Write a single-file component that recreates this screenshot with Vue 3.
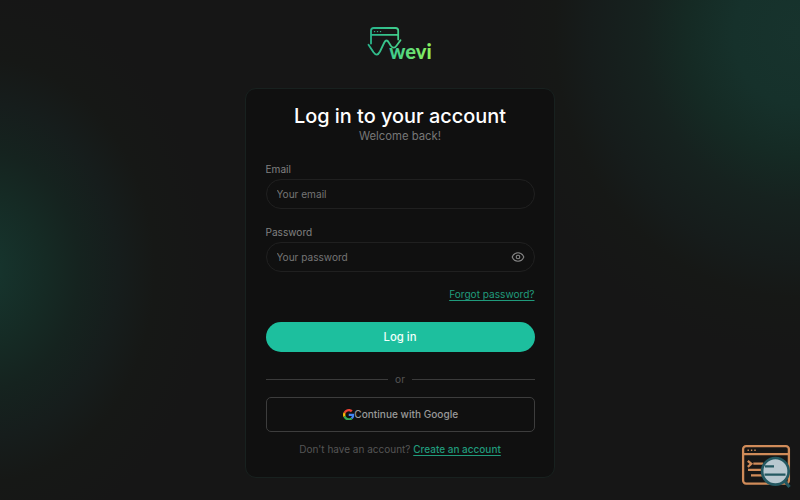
<template>
  <div class="page">

    <div class="glow glow-left"></div>
    <div class="glow glow-right"></div>

    <svg class="logo" viewBox="0 0 66 36" aria-label="wevi">
      <defs>
        <linearGradient id="brand" gradientUnits="userSpaceOnUse" x1="0" y1="0" x2="66" y2="14">
          <stop offset="0" stop-color="#25b18c"/>
          <stop offset=".5" stop-color="#43cf8b"/>
          <stop offset="1" stop-color="#8cf15c"/>
        </linearGradient>
      </defs>
      <g fill="none" stroke="url(#brand)" stroke-width="1.800" stroke-linecap="round" stroke-linejoin="round">
        <path d="M4 17.500V4.600q0-2.600 2.600-2.600h22q2.600 0 2.600 2.600V13.500M4 8.800h27.200"/>
        <path d="M1.500 18.700L6.500 26.200Q10 31.200 13 25.500L17.300 16.500Q19.500 12.500 21.800 16.500L23.800 19.800Q26.800 23.600 29.500 19.800L33.500 14.300"/>
        <path d="M7.500 5.600h.1M10.500 5.600h.1M13.500 5.600h.1" stroke-width="1.400"/>
      </g>
      <text x="22.300" y="32.500" textLength="42.300">wevi</text>
    </svg>

    <main class="card">

      <h1>Log in to your account</h1>
      <p class="subtitle">Welcome back!</p>

      <form @submit.prevent>

        <div class="field">
          <label for="email">Email</label>
          <div class="input-wrapper">
            <input id="email" v-model="email" type="email" placeholder="Your email"/>
          </div>
        </div>

        <div class="field">
          <label for="password">Password</label>
          <div class="input-wrapper">
            <input
              id="password"
              v-model="password"
              :type="showPassword ? 'text' : 'password'"
              placeholder="Your password"
            />
            <button
              class="toggle"
              type="button"
              aria-label="Show password"
              @click="showPassword = !showPassword"
            >
              <svg viewBox="0 0 14 12">
                <path d="M1.200 6C2.400 3.100 4.500 1.800 7 1.800S11.600 3.100 12.800 6C11.600 8.900 9.500 10.200 7 10.200S2.400 8.900 1.200 6Z"/>
                <circle cx="7" cy="6" r="1.800"/>
              </svg>
            </button>
          </div>
        </div>

        <div class="forgot">
          <a href="#">Forgot password?</a>
        </div>

        <button class="submit" type="submit">Log in</button>

      </form>

      <div class="divider"><span>or</span></div>

      <button class="google" type="button">
        <svg viewBox="0 0 48 48">
          <path fill="#EA4335" d="M24 9.500c3.540 0 6.710 1.220 9.210 3.600l6.850-6.850C35.900 2.380 30.470 0 24 0 14.620 0 6.510 5.380 2.560 13.220l7.980 6.190C12.430 13.720 17.740 9.500 24 9.500z"/>
          <path fill="#4285F4" d="M46.980 24.550c0-1.570-.15-3.090-.38-4.550H24v9.020h12.940c-.58 2.960-2.260 5.480-4.780 7.180l7.730 6c4.510-4.180 7.090-10.360 7.090-17.650z"/>
          <path fill="#FBBC05" d="M10.530 28.590c-.48-1.450-.76-2.990-.76-4.590s.27-3.140.76-4.590l-7.980-6.190C.92 16.460 0 20.120 0 24s.92 7.540 2.560 10.780l7.970-6.190z"/>
          <path fill="#34A853" d="M24 48c6.480 0 11.930-2.130 15.890-5.810l-7.730-6c-2.150 1.450-4.920 2.300-8.160 2.300-6.260 0-11.570-4.220-13.470-9.910l-7.980 6.190C6.510 42.620 14.620 48 24 48z"/>
        </svg>
        <span>Continue with Google</span>
      </button>

      <p class="signup">Don't have an account? <a href="#">Create an account</a></p>

    </main>

    <button class="inspector" type="button" aria-label="Open inspector">
      <svg viewBox="0 0 50 44">
        <g fill="none" stroke="#d08b59" stroke-width="2.300">
          <rect x="2.100" y="2.100" width="45.800" height="37.500" rx="3"/>
          <path d="M2 10.200h46"/>
          <path d="M6.500 6.200h1.400M9.900 6.200h1.400M13.300 6.200h1.400" stroke-width="1.500"/>
          <path d="M6.800 16.800l3.500 3-3.500 3M12.300 19.700h10M7 25.800h13M10 31.300h12"/>
        </g>
        <path d="M44 37.500l4.500 5.500" stroke="#245861" stroke-width="3"/>
        <circle cx="34.400" cy="27.300" r="13.300" fill="#b9c8d0" stroke="#245861" stroke-width="2.700"/>
        <path d="M24 22.300h9M23.500 30.700h21" stroke="#245861" stroke-width="2.200"/>
      </svg>
    </button>

  </div>
</template>

<script setup>
import { ref } from 'vue'

const email = ref('')
const password = ref('')
const showPassword = ref(false)
</script>

<style>
body {
  margin: 0;
  background: #161616;
}
</style>

<style scoped>
* {
  box-sizing: border-box;
}

.page {
  position: relative;
  height: 500px;
  overflow: hidden;
  display: flex;
  flex-direction: column;
  align-items: center;
  padding-top: 26px;
  background: #161616;
  font-family: Inter, "Liberation Sans", sans-serif;
}

.glow {
  position: absolute;
  border-radius: 50%;
}

.glow-left {
  left: -250px;
  top: -10px;
  width: 460px;
  height: 560px;
  background: radial-gradient(closest-side, #17362f 0%, #16332c 9%, #152a24 29%, #15231f 43%, #161d1c 60%, #161816 76%, #161616 100%);
}

.glow-right {
  right: -300px;
  top: -285px;
  width: 600px;
  height: 640px;
  background: radial-gradient(closest-side, #17332d 0%, #16312b 22%, #152a24 38%, #16221f 52%, #161c1b 70%, #161816 82%, #161616 100%);
}

.logo {
  position: relative;
  width: 66px;
  height: 36px;
  flex: none;
}

.logo text {
  font: 900 20px Lato, sans-serif;
  fill: url(#brand);
}

.card {
  position: relative;
  width: 310px;
  height: 390px;
  margin-top: 26px;
  padding: 14px 19.5px 0;
  border: 1px solid #18211f;
  border-radius: 11px;
  background: #101010;
}

h1 {
  margin: 0;
  font-size: 19.9px;
  line-height: 26px;
  font-weight: 500;
  text-align: center;
  white-space: nowrap;
  color: #fff;
}

.subtitle {
  margin: 0;
  font-size: 11.3px;
  line-height: 14px;
  text-align: center;
  color: #777;
}

form {
  margin-top: 18px;
}

.field {
  margin-bottom: 15px;
}

label {
  display: block;
  font-size: 10.1px;
  line-height: 16px;
  margin-bottom: 2px;
  color: #808080;
}

.input-wrapper {
  display: flex;
  align-items: center;
  height: 30px;
  padding: 0 9px 0 10px;
  border: 1px solid #202020;
  border-radius: 15px;
}

input {
  flex: 1;
  min-width: 0;
  padding: 0;
  border: none;
  outline: none;
  background: transparent;
  font: 10.1px Inter, sans-serif;
  color: #ddd;
}

input::placeholder {
  color: #757575;
  opacity: 1;
}

.toggle {
  display: flex;
  padding: 0;
  border: none;
  background: none;
  cursor: pointer;
}

.toggle svg {
  width: 14px;
  height: 12px;
  fill: none;
  stroke: #858585;
  stroke-width: 1.1;
}

a {
  color: #209b7c;
  text-decoration: underline;
  text-underline-offset: 2px;
}

.forgot {
  margin-top: -1px;
  font-size: 10.1px;
  line-height: 16px;
  text-align: right;
}

.submit {
  display: block;
  width: 100%;
  height: 30px;
  margin-top: 20px;
  padding: 0;
  border: none;
  border-radius: 15px;
  background: #1dbf9e;
  font: 500 11.3px Inter, sans-serif;
  color: #f2fffb;
  cursor: pointer;
}

.divider {
  display: flex;
  align-items: center;
  gap: 7px;
  height: 16px;
  margin-top: 19.5px;
  font-size: 10.1px;
  color: #555;
}

.divider span {
  line-height: 14px;
  padding-bottom: 1px;
}

.divider::before,
.divider::after {
  content: "";
  flex: 1;
  height: 1px;
  background: #3b3b3b;
}

.google {
  display: flex;
  align-items: center;
  justify-content: center;
  width: 100%;
  height: 35.5px;
  margin-top: 9px;
  padding: 0 0 0 1px;
  border: 1px solid #3d3d3d;
  border-radius: 5px;
  background: none;
  font: 500 10.1px Inter, sans-serif;
  color: #999;
  cursor: pointer;
}

.google svg {
  width: 11.5px;
  height: 11.5px;
}

.signup {
  margin: 9px 0 0;
  font-size: 10px;
  line-height: 16px;
  text-align: center;
  color: #555;
}

.signup a {
  font-weight: 500;
}

.inspector {
  position: absolute;
  left: 741px;
  top: 444px;
  width: 50px;
  height: 44px;
  padding: 0;
  border: none;
  background: none;
  cursor: pointer;
}

.inspector svg {
  display: block;
  width: 50px;
  height: 44px;
}
</style>
